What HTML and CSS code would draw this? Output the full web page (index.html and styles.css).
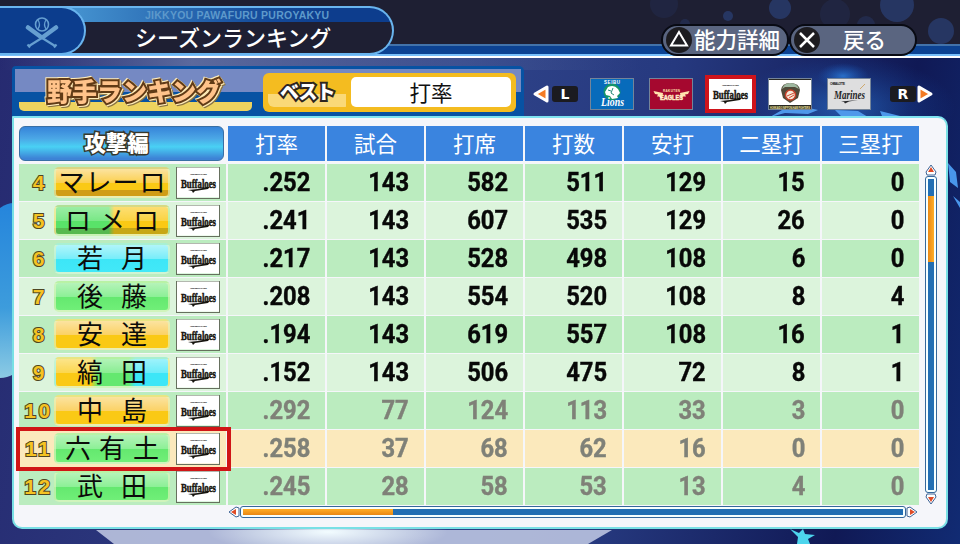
FILE: index.html
```
<!DOCTYPE html>
<html lang="ja">
<head>
    <meta charset="utf-8">
    <title>シーズンランキング</title>
    <link rel="stylesheet" href="styles.css">
</head>

<body>
    <div class="screen">
        <!-- stage lights behind the panel -->
        <svg class="backdrop" width="960" height="544" viewBox="0 0 960 544">
            <defs>
                <linearGradient id="haze"><stop offset="0" stop-color="#6070a0" stop-opacity="0"/><stop offset=".3" stop-color="#7080ac"/><stop offset="1" stop-color="#6070a0" stop-opacity="0"/></linearGradient>
                <radialGradient id="glow"><stop offset="0" stop-color="#f2fcff"/><stop offset="1" stop-color="#f2fcff" stop-opacity="0"/></radialGradient>
                <radialGradient id="blue"><stop offset="0" stop-color="#2f86e6" stop-opacity=".9"/><stop offset="1" stop-color="#185abf" stop-opacity="0"/></radialGradient>
                <linearGradient id="left" x2="0" y2="1"><stop offset="0" stop-color="#2585dc"/><stop offset=".6" stop-color="#3d9cdc"/><stop offset="1" stop-color="#8ccbe4"/></linearGradient>
            </defs>
            <rect y="58" width="640" height="12" fill="url(#haze)" opacity=".7"/>
            <path d="M0 208Q7 203 14 203V374Q7 378 0 378Z" fill="url(#left)"/>
            <path d="M96 530H612L588 544H114Z" fill="#c4cde6" opacity=".85"/>
            <ellipse cx="328" cy="532" rx="120" ry="22" fill="url(#glow)"/>
            <ellipse cx="845" cy="108" rx="110" ry="52" fill="url(#blue)" opacity=".6"/>
            <ellipse cx="843" cy="76" rx="26" ry="13" fill="url(#blue)" opacity=".8"/>
            <path d="M770 117L782 110L800 106L818 110L808 114L785 113ZM835 110L858 111L868 117H842ZM880 111L900 116H882Z" fill="#4e98ea"/>
            <path d="M948 163L956 172L958 188L950 182ZM953 196L960 202V208Z" fill="#4996eb"/>
            <path d="M790 529L799 533L803 529L805 534L815 535L808 539L810 544H797L798 537Z" fill="#4dd5ed"/>
        </svg>

        <div class="header">
            <svg class="bubbles" width="330" height="44">
                <g fill="#2f4d91" opacity=".5">
                    <circle cx="34" cy="4" r="14" opacity=".3"/><circle cx="98" cy="16" r="5"/>
                    <circle cx="150" cy="8" r="11"/><circle cx="55" cy="24" r="5" opacity=".5"/>
                    <circle cx="205" cy="14" r="15" opacity=".3"/><circle cx="236" cy="25" r="9" opacity=".5"/>
                    <circle cx="267" cy="5" r="17"/><circle cx="311" cy="31" r="13"/>
                </g>
            </svg>
            <div class="title">
                <div class="emblem">
                    <svg width="34" height="34" viewBox="0 0 34 34" fill="none" stroke="#669fd1">
                        <circle cx="17" cy="8.500" r="6.500" stroke-width="1.6"/>
                        <path d="M13 4Q16 8.500 13 13M21 4Q18 8.500 21 13" stroke-width="1.2"/>
                        <path d="M3 11.500L16 21M31 11.500L18 21" stroke-width="4.500" stroke-linecap="round"/>
                        <path d="M14 20L30 30M20 20L4 30" stroke-width="2.200"/>
                        <path d="M29 31.500L31.500 28.500M5 31.500L2.500 28.500" stroke-width="2"/>
                    </svg>
                </div>
                <div class="title-text">
                    <div class="subtitle">JIKKYOU PAWAFURU PUROYAKYU</div>
                    <h1>シーズンランキング</h1>
                </div>
            </div>
            <div class="guide">
                <div class="hint">
                    <svg width="26" height="26"><circle cx="13" cy="13" r="13" fill="#1d1c20"/><path d="M13 5L21 18.500H5Z" fill="none" stroke="#fff" stroke-width="2"/></svg>
                    <span>能力詳細</span>
                </div>
                <div class="hint back">
                    <svg width="26" height="26"><circle cx="13" cy="13" r="13" fill="#1d1c20"/><path d="M6 6L20 20M20 6L6 20" stroke="#fff" stroke-width="2.500"/></svg>
                    <span>戻る</span>
                </div>
            </div>
        </div>

        <div class="tabs">
            <div class="category">
                <div class="category-name"><h2>野手ランキング</h2></div>
                <div class="best">
                    <div class="best-label"><span>ベスト</span></div>
                    <div class="best-value">打率</div>
                </div>
            </div>
            <div class="teams">
                <svg class="arrow" width="18" height="20"><path d="M3 10L15 3V17Z" fill="#f37b25" stroke="#fff" stroke-width="3" stroke-linejoin="round"/></svg>
                <div class="key">L</div>
                <div class="team">
                    <svg width="44" height="32">
                        <rect width="44" height="32" fill="#076bbb"/>
                        <circle cx="22" cy="14" r="8.500" fill="#159469"/>
                        <path d="M15 14L18 9Q24 6 28 11L30 15L27 18L28 20L22 21L20 18L16 17Z" fill="#fff"/>
                        <path d="M18 12L21 13M23 10L21 15L24 17" fill="none" stroke="#278b79"/>
                        <text x="14" y="6" font-size="4.500" font-weight="bold" textLength="16" fill="#fff">SEIBU</text>
                        <text x="11" y="28" class="script" font-size="12" textLength="23" lengthAdjust="spacingAndGlyphs" fill="#fff">Lions</text>
                    </svg>
                </div>
                <div class="team">
                    <svg width="44" height="32">
                        <rect width="44" height="32" fill="#a5082f"/>
                        <path d="M4.500 13L14 15L13 21L10 18.500L8 18.500L9 16.500L6 16ZM40.500 13L31 15L32 21L34 18.500L37 18.500L36 16.500L39 16Z" fill="#ffe3ad"/>
                        <text x="14" y="13.500" font-size="3" font-weight="bold" textLength="17" fill="#ffe3ad">RAKUTEN</text>
                        <text x="11" y="21.500" font-size="8" font-weight="bold" textLength="23" lengthAdjust="spacingAndGlyphs" fill="#fff" stroke="#ffe3ad" stroke-width=".5">EAGLES</text>
                    </svg>
                </div>
                <div class="team selected">
                    <svg width="44" height="32">
                        <g id="buffaloes">
                            <rect width="44" height="32" fill="#fff"/>
                            <text x="14" y="8" font-size="2.500" font-weight="bold" textLength="17" fill="#222">ORIX BUFFALOES</text>
                            <text x="5" y="20.500" class="blackletter" font-size="13" textLength="35" lengthAdjust="spacingAndGlyphs" fill="#17150f" stroke="#17150f" stroke-width=".5">Buffaloes</text>
                            <path d="M12 23Q22 22.500 34 19.500L32 22L19 24L17 26L16 24Z" fill="#17150f"/>
                        </g>
                    </svg>
                </div>
                <div class="team">
                    <svg width="44" height="32">
                        <rect width="44" height="32" fill="#fff"/>
                        <path d="M0 0H44V2H0ZM0 27H44V32H0Z" fill="#292923"/>
                        <path d="M13 12Q14 5 22 5Q31 5 32 12L30 20L22 25L15 20Z" fill="#514a3a"/>
                        <path d="M14 11Q16 5 22 5Q29 5 31 11L27 9L17 9Z" fill="#9fb8a0"/>
                        <circle cx="22.500" cy="17" r="5" fill="#f5e9d8" stroke="#c53e28" stroke-width="1.500"/>
                        <path d="M19 18L26 15M21 20L26 17" stroke="#d24c36"/>
                        <text x="2" y="31" font-size="3.600" font-weight="bold" textLength="40" lengthAdjust="spacingAndGlyphs" fill="#fbe9a0">HOKKAIDO NIPPON-HAM FIGHTERS</text>
                    </svg>
                </div>
                <div class="team">
                    <svg width="44" height="32">
                        <rect width="44" height="32" fill="#dededf"/>
                        <text x="3" y="6.500" font-size="3" font-weight="bold" textLength="15" fill="#222">CHIBA LOTTE</text>
                        <text x="7" y="21" class="script" font-size="12" textLength="31" lengthAdjust="spacingAndGlyphs" fill="#262629">Marines</text>
                        <path d="M14 23.500L31 22L22 23.500L18 25.500L17 24Z" fill="#262629"/>
                        <path d="M33 11L38 6" stroke="#cfa96e"/>
                    </svg>
                </div>
                <div class="key right">R</div>
                <svg class="arrow" width="18" height="20"><path d="M15 10L3 3V17Z" fill="#f37b25" stroke="#fff" stroke-width="3" stroke-linejoin="round"/></svg>
            </div>
        </div>

        <div class="panel">
            <div class="content">
                <div class="row head">
                    <div class="section"><span>攻撃編</span></div>
                    <div>打率</div><div>試合</div><div>打席</div><div>打数</div><div>安打</div><div>二塁打</div><div>三塁打</div>
                </div>
                <div id="rows"></div>
                <div class="hscroll">
                    <svg width="12" height="12"><path d="M1 6L8 1L11 2V10L8 11Z" fill="#fff" stroke="#3e6495"/><path d="M3 6L8 3V9Z" fill="#df4b26"/></svg>
                    <div class="track"><div class="bar"><div class="thumb"></div></div></div>
                    <svg width="12" height="12"><path d="M11 6L4 1L1 2V10L4 11Z" fill="#fff" stroke="#3e6495"/><path d="M9 6L4 3V9Z" fill="#df4b26"/></svg>
                </div>
            </div>
            <div class="vscroll">
                <svg width="12" height="12"><path d="M6 1L11 8L10 11H2L1 8Z" fill="#fff" stroke="#3e6495"/><path d="M6 3L9 8H3Z" fill="#df4b26"/></svg>
                <div class="track"><div class="bar"><div class="thumb"></div></div></div>
                <svg width="12" height="12"><path d="M6 11L11 4L10 1H2L1 4Z" fill="#fff" stroke="#3e6495"/><path d="M6 9L9 4H3Z" fill="#df4b26"/></svg>
            </div>
        </div>
    </div>

    <script src="script.js"></script>
</body>
</html>
```
FILE: styles.css
```
*, *::after {
    box-sizing: border-box;
}
body {
    margin: 0;
    font-family: "Noto Sans CJK JP", sans-serif;
}
h1, h2 {
    margin: 0;
}
svg {
    display: block;
    flex: none;
}
svg text {
    font-family: "Liberation Sans", sans-serif;
}
svg .blackletter {
    font-family: "Liberation Serif", serif;
    font-weight: bold;
}
svg .script {
    font-family: "Liberation Serif", serif;
    font-style: italic;
    font-weight: bold;
}
.screen {
    position: relative;
    width: 960px;
    height: 544px;
    overflow: hidden;
    background: linear-gradient(100deg, #262a70 0%, #2f4389 45%, #26397f 65%, #101955 88%, #112b73 100%);
}
.backdrop {
    position: absolute;
    left: 0;
    top: 0;
}

/* header */
.header {
    position: relative;
    display: flex;
    justify-content: space-between;
    height: 58px;
    padding-top: 6px;
    border-bottom: 2px solid #fff;
    background: linear-gradient(#1e1f33 44px, #4272aa 44px, #4272aa 46px, #0c4292 46px, #0c4292 54px, #78bffa 54px);
}
.bubbles {
    position: absolute;
    right: 0;
    top: 0;
}
.title {
    display: flex;
    width: 394px;
    height: 49px;
    border: 2px solid #69b4ee;
    border-left: 0;
    border-radius: 0 25px 25px 0;
    background: linear-gradient(90deg, #4390ce 80px, #174f9e 250px, #0d3d8d 330px) 0 0 / 100% 14px no-repeat #1e1f33;
}
.emblem {
    display: flex;
    align-items: center;
    width: 86px;
    height: 49px;
    margin-top: -2px;
    padding-left: 25px;
    border: 2px solid #69b4ee;
    border-left: 0;
    border-radius: 0 25px 25px 0;
    background: #0c3d8d;
}
.emblem svg {
    margin-top: 4px;
}
.title-text {
    padding-left: 49px;
}
.subtitle {
    height: 14px;
    padding-left: 10px;
    font: bold 10.5px/14px "Liberation Sans", sans-serif;
    letter-spacing: 0.25px;
    white-space: nowrap;
    color: #5d99cb;
}
h1 {
    font-size: 22px;
    font-weight: 500;
    line-height: 29px;
    color: #fff;
}
.guide {
    position: relative;
    display: flex;
    padding: 18px 43px 0 0;
}
.hint {
    display: flex;
    align-items: center;
    width: 128px;
    height: 32px;
    padding-left: 3px;
    border: 2px solid #080a13;
    border-radius: 16px;
    background: #5a6580;
    color: #fff;
    font-size: 21.5px;
    font-weight: 500;
    line-height: 26px;
}
.hint span {
    flex: 1;
    white-space: nowrap;
    padding: 0 0 2px 2px;
}
.hint.back span {
    padding-left: 23px;
}

/* tabs above the panel */
.tabs {
    position: relative;
    display: flex;
    height: 60px;
    padding: 8px 0 0 12px;
}
.category {
    display: flex;
    width: 512px;
    height: 52px;
    padding: 3px;
    border-radius: 4px 5px 0 0;
    background: linear-gradient(#7589c3, #7589c3) 3px 3px / 506px 23px no-repeat #0752a3;
}
.category-name {
    width: 233px;
    height: 42px;
    margin: 0 11px 0 4px;
    padding-left: 28px;
    background: linear-gradient(#eed35e, #eed35e) 0 33px / 100% 9px no-repeat;
    border-radius: 0 0 5px 5px;
}
h2 {
    font-size: 25px;
    font-weight: 900;
    line-height: 43px;
    white-space: nowrap;
    color: #ffc38a;
    -webkit-text-stroke: 4px #613b16;
    paint-order: stroke fill;
    filter: drop-shadow(1px 1px 0 #ffecb8) drop-shadow(-1px -1px 0 #ffecb8) drop-shadow(1px 1px 0 #8a7442);
}
.best {
    display: flex;
    width: 253px;
    height: 39px;
    margin-top: 4px;
    padding: 4px 5px;
    border-radius: 6px;
    background: #f4bc20;
}
.best-label {
    width: 83px;
    height: 30px;
    padding-left: 12px;
    background: linear-gradient(#fad978, #fad978) 0 17px / 78px 13px no-repeat;
    border-radius: 6px;
}
.best-label span {
    font-size: 19px;
    font-weight: 900;
    line-height: 28px;
    letter-spacing: -1px;
    color: #fff;
    -webkit-text-stroke: 4px #2d2520;
    paint-order: stroke fill;
}
.best-value {
    width: 160px;
    height: 30px;
    border-radius: 5px;
    background: #fff;
    text-align: center;
    font-size: 21.5px;
    line-height: 29px;
    color: #111;
}
.teams {
    display: flex;
    align-items: center;
    height: 56px;
    padding-left: 8px;
}
.key {
    width: 26px;
    height: 16px;
    border-radius: 3px;
    background: #1b1b20;
    color: #fff;
    font: bold 14px/16px "DejaVu Sans", sans-serif;
    text-align: center;
    margin: 0 12px 0 2px;
}
.key.right {
    margin: 0 0 0 19px;
}
.team {
    border: 1px solid #748499;
    width: 44px;
    height: 32px;
    margin-right: 15px;
    overflow: hidden;
}
.team svg {
    margin: -1px;
}
.team.selected {
    width: 51px;
    height: 38px;
    margin: 0 12px 0 -3px;
    border: 4px solid #cf141b;
}
.team:has(+ .key) {
    margin-right: 0;
}

/* ranking table */
.panel {
    position: relative;
    display: flex;
    width: 936px;
    height: 413px;
    margin: -2px 0 0 12px;
    padding: 8px 0 0 5px;
    border: 2px solid #79e0e5;
    border-top-color: #7fe3f0;
    border-radius: 0 10px 10px 10px;
    background: #f5f6fa;
}
.content {
    width: 902px;
}
.row {
    display: grid;
    grid-template-columns: 207px repeat(7, 97px);
    column-gap: 2px;
    height: 36px;
    margin-bottom: 2px;
}
.row.head {
    height: 35px;
    margin-bottom: 3px;
}
.head > div {
    background: #3a84df;
    color: #fff;
    font-size: 21.5px;
    line-height: 33px;
    text-align: center;
}
.head > .section {
    width: 205px;
    border: 1px solid #386fa5;
    border-radius: 6px;
    background: linear-gradient(#3684d9, #4ba7e6 35%, #49d1f4 60%, #3d83d6 95%);
    font-weight: 900;
    line-height: 30px;
    padding-right: 10px;
}
.section span {
    -webkit-text-stroke: 3px #39382c;
    paint-order: stroke fill;
}
.player, .stat {
    background: #bbecbf;
}
.row.light > div {
    background: #dcf4dc;
}
.row.mine > div {
    background: #fbe9bc;
}
.player {
    display: flex;
    align-items: center;
}
.rank {
    width: 35px;
    padding-left: 4px;
    text-align: center;
    font: bold 21px "Liberation Sans", sans-serif;
    color: #f5c323;
    -webkit-text-stroke: 2px #4e4523;
    paint-order: stroke fill;
}
.rank.wide {
    letter-spacing: 2.5px;
}
.name {
    display: flex;
    justify-content: center;
    width: 116px;
    height: 31px;
    margin-right: 6px;
    border: 2px solid rgba(225, 245, 190, 0.65);
    border-radius: 5px;
    color: #0c0c0a;
    font-size: 26px;
    line-height: 24px;
}
.name span {
    text-align: center;
}
.n2 span {
    width: 44px;
}
.n3 span {
    width: 34px;
}
.n4 span {
    width: 27px;
}
.yellow {
    background: linear-gradient(#fbe3a0, #fbd266 50%, #fac915 51%, #fac915);
}
.gold {
    background: linear-gradient(#fbe3a0, #fbd050 50%, #fac915 51%, #fac915 76%, #d09c16 77%);
}
.green {
    background: linear-gradient(#b5f3b9, #8df097 50%, #64e86f 51%, #70ef78);
}
.cyan {
    background: linear-gradient(#b1f5fa, #79edfa 50%, #3ce6f7 51%, #42e8f8);
}
.green-gold {
    background: linear-gradient(rgba(255, 255, 255, 0.4), rgba(255, 255, 255, 0.2) 50%, transparent 51%, transparent 76%, rgba(80, 90, 20, 0.3) 77%), linear-gradient(90deg, #59e269 47%, #fac915 52%);
}
.mixed {
    background: linear-gradient(rgba(255, 255, 255, 0.5), rgba(255, 255, 255, 0.25) 50%, transparent 51%), linear-gradient(90deg, #fac915 31%, #64e86f 37%, #64e86f 65%, #3ce6f7 71%);
}
.logo {
    border: 1px solid #66705e;
    width: 44px;
    height: 32px;
}
.logo svg {
    margin: -1px 0 0 -1px;
    clip-path: inset(1px);
}
.stat {
    padding-right: 15px;
    text-align: right;
    font: bold 25px/37px Roboto, sans-serif;
    color: #080808;
}
.stat span {
    display: inline-block;
    transform: scaleX(0.95);
    transform-origin: right;
    -webkit-text-stroke: 0.4px;
}
.row.off .stat {
    color: #7f8178;
}
.row.mine {
    position: relative;
}
/* red frame round the player */
.row.mine::after {
    content: "";
    position: absolute;
    left: -3px;
    top: -3px;
    width: 215px;
    height: 44px;
    border: 4px solid #d01516;
}

/* scroll bars */
.hscroll {
    display: flex;
    width: 690px;
    margin: 2px 0 0 209px;
}
.vscroll {
    display: flex;
    flex-direction: column;
    width: 12px;
    height: 341px;
    margin: 38px 0 0 4px;
}
.track {
    flex: 1;
    padding: 2px;
    border: 1px solid #35679b;
    border-radius: 3px;
    background: #f6ffff;
}
.bar {
    height: 100%;
    background: #226eb3;
}
.hscroll .thumb {
    width: 150px;
    height: 100%;
    background: linear-gradient(#ffae27, #e98715);
}
.vscroll .bar {
    padding-top: 17px;
}
.vscroll .thumb {
    height: 66px;
    background: linear-gradient(90deg, #e98715, #ffae27);
}
```
FILE: script.js
```
var players = [
    [4, "マレーロ", "gold", [".252", 143, 582, 511, 129, 15, 0]],
    [5, "ロメロ", "green-gold", [".241", 143, 607, 535, 129, 26, 0]],
    [6, "若月", "cyan", [".217", 143, 528, 498, 108, 6, 0]],
    [7, "後藤", "green", [".208", 143, 554, 520, 108, 8, 4]],
    [8, "安達", "yellow", [".194", 143, 619, 557, 108, 16, 1]],
    [9, "縞田", "mixed", [".152", 143, 506, 475, 72, 8, 1]],
    [10, "中島", "yellow", [".292", 77, 124, 113, 33, 3, 0]],
    [11, "六有土", "green", [".258", 37, 68, 62, 16, 0, 0]],
    [12, "武田", "green", [".245", 28, 58, 53, 13, 4, 0]]
];

var html = "";
players.forEach(function (p) {
    var cls = "row";
    if (p[0] % 2 == 1) cls += " light";
    if (p[0] >= 10) cls += " off"; // not enough plate appearances
    if (p[0] == 11) cls += " mine";

    html += '<div class="' + cls + '"><div class="player">';
    html += '<div class="rank' + (p[0] > 9 ? " wide" : "") + '">' + p[0] + '</div>';
    html += '<div class="name n' + p[1].length + ' ' + p[2] + '">';
    p[1].split("").forEach(function (c) {
        html += '<span>' + c + '</span>';
    });
    html += '</div><div class="logo"><svg width="44" height="32"><use href="#buffaloes"/></svg></div></div>';
    p[3].forEach(function (n) {
        html += '<div class="stat"><span>' + n + '</span></div>';
    });
    html += '</div>';
});
document.getElementById("rows").innerHTML = html;
```
